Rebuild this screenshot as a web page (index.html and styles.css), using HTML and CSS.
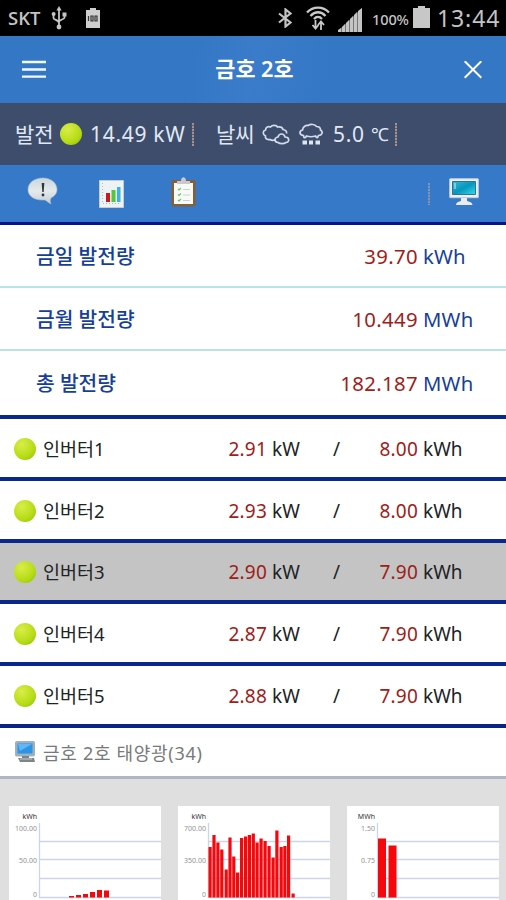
FILE: index.html
```html
<!DOCTYPE html>
<html lang="ko">
<head>
<meta charset="utf-8">
<title>금호 2호</title>
<link rel="stylesheet" href="styles.css">
</head>
<body>
<svg class="defs" width="0" height="0" aria-hidden="true">
  <defs>
    <linearGradient id="screen" x1="0" y1="0" x2="1" y2="1"><stop offset="0" stop-color="#35b9d3"/><stop offset=".5" stop-color="#0796be"/><stop offset="1" stop-color="#35dce8"/></linearGradient>
    <linearGradient id="bubble" x1="0" y1="0" x2="0" y2="1"><stop offset="0" stop-color="#c9d7df"/><stop offset=".5" stop-color="#e5e9eb"/><stop offset="1" stop-color="#c4ced6"/></linearGradient>
  </defs>
</svg>
<div class="app">
  <div class="status">
    <span class="carrier">SKT</span>
    <svg class="usb" width="16" height="24" viewBox="0 0 16 24" fill="none" stroke="#c4c4c4" stroke-width="1.8"><path d="M8 3v18M2.500 9v3c0 2 5.500 2 5.500 5M13.500 9v2.500c0 2-5.500 2-5.500 4.500"/><path d="M8 0l2.600 4.500H5.400z" fill="#c4c4c4" stroke="none"/><circle cx="8" cy="21" r="2.400" fill="#c4c4c4" stroke="none"/><circle cx="2.600" cy="8" r="2" fill="#c4c4c4" stroke="none"/><path d="M11.500 6.500h4v4h-4z" fill="#c4c4c4" stroke="none"/></svg>
    <svg class="battery-small" width="14" height="20" viewBox="0 0 14 20"><path d="M4 0h6v2h4v18H0V2h4z" fill="#cecece"/><path d="M2.500 8v5M5 8h2v5H5zM9 8h2v5H9z" fill="none" stroke="#333" stroke-width="1.200"/></svg>
    <svg class="bluetooth" width="15" height="20" viewBox="0 0 15 20" fill="none" stroke="#c4c4c4" stroke-width="2.200"><path d="M1 5.500l11.500 9L7.500 18.500v-17l5 4L1 14.500"/></svg>
    <svg class="wifi" width="24" height="25" viewBox="0 0 24 25" fill="none" stroke="#c9c9c9" stroke-width="2.300"><path d="M1 6.500c6-6.500 16-6.500 22 0M4.500 10c4.500-5 10.500-5 15 0M8 13c2.500-2.800 5.500-2.800 8 0"/><path d="M9.500 14v8M6.500 19l3 3.500 3-3.500M15 24v-8M12 19l3-3.500 3 3.500" stroke-width="1.800"/></svg>
    <svg class="signal" width="24" height="24" viewBox="0 0 24 24" fill="#c4c4c4"><path d="M0 22l3-2v4H0zM4 19l3-3v8H4zM8 15l3-3v12H8zM12 11l3-3v16h-3zM16 7l3-3v20h-3zM20 3l4-3v24h-4z"/><path d="M0 23L24 0v24H0z" opacity=".6"/></svg>
    <span class="percent">100%</span>
    <svg class="battery" width="17" height="22" viewBox="0 0 17 22"><path d="M5 0h7v2h5v20H0V2h5z" fill="#c7c7c7"/></svg>
    <span class="clock">13:44</span>
  </div>

  <header class="title-bar">
    <svg width="24" height="20" viewBox="0 0 24 20" stroke="#f4f9ff" stroke-width="2.300"><path d="M0 2h24M0 9.500h24M0 16.700h24"/></svg>
    <h1>금호 2호</h1>
    <svg width="18" height="18" viewBox="0 0 18 18" stroke="#fff" stroke-width="2"><path d="M.7.200l16.600 16.600M17.300.200L.7 16.800"/></svg>
  </header>

  <section class="summary">
    <span class="gen">발전</span><i class="dot"></i><span class="gen-value">14.49 kW</span><i class="divider"></i>
    <span class="weather">날씨</span>
    <svg class="cloud" width="28" height="22" viewBox="0 0 28 22" fill="none" stroke="#d1dbeb" stroke-width="1.700"><path d="M14 16.500c-2 1-4 1.500-6 0-4 .5-5-1.500-4.500-3.500C.500 11 .5 8 3.500 7c0-3 3-4 5-3 2-2.500 6-2 7 0 3-.5 5 .5 5.500 2.500 3 .5 4 2 3.500 4"/><path d="M16 19.500c-4-.5-4-5 0-5.500 1-4 6-4 7 0 4.500 0 5 5 1 5.500-2 1.500-6 1.500-8 0z"/></svg>
    <svg class="snow" width="24" height="23" viewBox="0 0 24 23" fill="none" stroke="#d1dbeb" stroke-width="1.700"><path d="M5 14.500l-.5-2C0 12 0 8 3.500 7 4 3.500 7 2 9 2.500c3-2 7-1 8.500 1 3 0 4 1.500 4 3.500 3 2 1.500 5.500-2 5.500l-1 2c-1 .5-1.500-.5-2-1.500-3 1-6 1-9 0-.500 1-1.500 2-2.500 1.500z"/><path d="M3.500 17.500h4.500v4H3.500zM10 17.500h4v4h-4zM16.500 17.500h4.500v4h-4.500z" fill="#dce6f2" stroke="none"/></svg>
    <span class="temp">5.0</span><span class="celsius">℃</span><i class="divider"></i>
  </section>

  <nav class="tools">
    <svg class="tool-alert" width="32" height="28" viewBox="0 0 32 28"><path d="M16 1C7 1 1 6 1 12.500 1 19 7 23 15 23h3c2 1 3.500 3 6 4-1-2.500-1-4 0-6 4-2 6-5 6-8.500C30 6 24 1 16 1z" fill="url(#bubble)" stroke="#a8bdcf" stroke-width=".6"/><path d="M14.700 6h2.600l-.6 9h-1.400z" fill="#30353b"/><circle cx="16" cy="18" r="1.400" fill="#30353b"/></svg>
    <svg class="tool-chart" width="25" height="28" viewBox="0 0 25 28"><path d="M.500.500h24v27H.500z" fill="#edf2f4" stroke="#c5cdd3"/><path d="M3.500 3v19M4 23.500h18" stroke="#afbabf" stroke-dasharray="1 2" fill="none"/><path d="M7 13h4v9H7z" fill="#c51b20"/><path d="M12.500 10h4v12h-4z" fill="#57c53b"/><path d="M18 7h3.500v15H18z" fill="#38b5dc"/></svg>
    <svg class="tool-list" width="25" height="31" viewBox="0 0 25 31"><rect x=".5" y="4" width="24" height="26.500" rx="2" fill="#865f35"/><path d="M3 7h19v21H3z" fill="#f8faf8"/><path d="M6 8V5h4c0-5 5-5 5 0h4v3z" fill="#c7cbd0"/><path d="M7 13l1 1 2-2M7 18.500l1 1 2-2M7 24l1 1 2-2" fill="none" stroke="#70c268" stroke-width="1.200"/><path d="M12 13.500h7M12 19h7M12 24.500h7" stroke="#cbd1d2"/></svg>
    <i class="divider tool-divider"></i>
    <svg class="tool-pc" width="30" height="28" viewBox="0 0 30 28"><rect x=".7" y=".7" width="28.600" height="19" rx=".5" fill="#edf0f4" stroke="#bfcbd8"/><path d="M3.500 3.500h23v13h-23z" fill="url(#screen)" stroke="#32728f"/><path d="M6 5v6" stroke="#c5f6ff"/><path d="M12 20h6v3c3 1 5 1 5.500 4H7c.500-3 2-3 5-4z" fill="#e9edf1"/></svg>
  </nav>

  <section class="totals">
    <div class="total"><span class="label">금일 발전량</span><span class="num">39.70</span><span class="unit">kWh</span></div>
    <div class="total"><span class="label">금월 발전량</span><span class="num">10.449</span><span class="unit">MWh</span></div>
    <div class="total"><span class="label">총 발전량</span><span class="num">182.187</span><span class="unit">MWh</span></div>
  </section>

  <section class="inverters">
    <div class="inverter"><i class="dot"></i><span class="name">인버터1</span><span class="num">2.91</span><span class="unit">kW</span><span>/</span><span class="num">8.00</span><span class="unit">kWh</span></div>
    <div class="inverter"><i class="dot"></i><span class="name">인버터2</span><span class="num">2.93</span><span class="unit">kW</span><span>/</span><span class="num">8.00</span><span class="unit">kWh</span></div>
    <div class="inverter selected"><i class="dot"></i><span class="name">인버터3</span><span class="num">2.90</span><span class="unit">kW</span><span>/</span><span class="num">7.90</span><span class="unit">kWh</span></div>
    <div class="inverter"><i class="dot"></i><span class="name">인버터4</span><span class="num">2.87</span><span class="unit">kW</span><span>/</span><span class="num">7.90</span><span class="unit">kWh</span></div>
    <div class="inverter"><i class="dot"></i><span class="name">인버터5</span><span class="num">2.88</span><span class="unit">kW</span><span>/</span><span class="num">7.90</span><span class="unit">kWh</span></div>
  </section>

  <div class="site">
    <svg width="21" height="22" viewBox="0 0 21 22"><rect x=".5" y=".5" width="19" height="14.500" rx="1" fill="#9ab1c3" stroke="#a6b0b8"/><path d="M2.500 2.500h15v10h-15z" fill="#2b94e6"/><path d="M3 3h14L5 10z" fill="#5fb8f5"/><path d="M7 15h7v2h5l1 4H5l-2-4h4z" fill="#7e8589"/><path d="M5 18h12" stroke="#c5cbd0"/></svg>
    <span>금호 2호 태양광(34)</span>
  </div>

  <section class="charts">
    <svg class="chart" width="152" height="94" viewBox="0 0 152 94">
      <path class="grid-line" d="M30.500 17v74.500H152M31 35.500h121M31 53.500h121M31 72.500h121"/>
      <text class="chart-unit" x="28" y="13">kWh</text><text x="28" y="25">100.00</text><text x="28" y="57">50.00</text><text x="28" y="91">0</text>
      <path class="bars" d="M60 90h5v1.500h-5zM67 89h5v2.500h-5zM74 88h5v3.500h-5zM81 86h5v5.500h-5zM88 84h5v7.500h-5zM95 84.500h5v7h-5z"/>
    </svg>
    <svg class="chart" width="152" height="94" viewBox="0 0 152 94">
      <path class="grid-line" d="M30.500 17v74.500H152M31 35.500h121M31 53.500h121M31 72.500h121"/>
      <path class="bars" d="M30.500 41h3.200v50.500h-3.200zM34.400 29h3.200v62.500h-3.200zM38.300 36.500h3.200v55h-3.200zM42.200 43.500h3.200v48h-3.200zM46.600 63.500h3.200v28h-3.200zM50.400 31.500h3.200v60h-3.200zM54.200 50.500h3.200v41h-3.200zM58 66.500h3.200v25H58zM62 32h3.200v59.500H62zM66 30.500h3.200v61H66zM69.800 29h3.200v62.500h-3.200zM73.700 27.500h3.200v64h-3.200zM77.500 36.500h3.200v55h-3.200zM81.500 32.500h3.200v59h-3.200zM85.500 35h3.200v56.500h-3.200zM89.500 40h3.200v51.500h-3.200zM93.500 51.500h3.200v40h-3.200zM97.300 24.500h3.200v67h-3.200zM101.600 41h3.200v50.500h-3.200zM105.300 40h3.200v51.500h-3.200zM109 29.500h3.200v62H109zM113.500 87.500h3.200v4h-3.200z"/>
      <text class="chart-unit" x="28" y="13">kWh</text><text x="28" y="25">700.00</text><text x="28" y="57">350.00</text><text x="28" y="91">0</text>
    </svg>
    <svg class="chart" width="152" height="94" viewBox="0 0 152 94">
      <path class="grid-line" d="M30.500 17v74.500H152M31 35.500h121M31 53.500h121M31 72.500h121"/>
      <path class="bars" d="M31 32.500h8v59h-8zM41.500 39.500h8v52h-8z"/>
      <text class="chart-unit" x="28" y="13">MWh</text><text x="28" y="25">1.50</text><text x="28" y="57">0.75</text><text x="28" y="91">0</text>
    </svg>
  </section>
</div>
</body>
</html>
```
FILE: styles.css
```css
* { box-sizing: border-box; }
body { margin: 0; overflow: hidden; font-family: "Noto Sans", "Noto Sans CJK KR", sans-serif; }
svg { display: block; flex: none; }
span { white-space: nowrap; }
.defs { position: absolute; }
.app { width: 506px; height: 900px; overflow: hidden; background: #fff; }

.status { display: flex; align-items: center; height: 36px; padding-left: 8px; background: #000; color: #c4c4c4; }
.carrier { flex: none; width: 43px; font: 600 18.500px/36px "Open Sans", sans-serif; }
.battery-small { margin-left: 19px; }
.bluetooth { margin-left: 178px; }
.wifi { margin-left: 13px; }
.signal { margin-left: 8px; margin-top: 4px; }
.percent { flex: none; width: 41px; margin-left: 10px; margin-top: 2px; font-size: 14.500px; font-weight: 500; letter-spacing: -.1px; }
.battery { margin-top: -2px; }
.clock { flex: none; margin-left: 7px; font-size: 23px; font-weight: 400; letter-spacing: .9px; }

.title-bar { display: flex; align-items: center; justify-content: space-between; height: 67px; padding: 0 24px 0 22px; background: linear-gradient(100deg, #3477c5 0 38%, #3a7cc9 50%, #3477c5 65%); }
.title-bar h1 { margin: 0 1px 2px 0; color: #fff; font-size: 21.800px; font-weight: 600; line-height: 30px; }

.dot { display: block; flex: none; width: 22px; height: 22px; border-radius: 50%; background: radial-gradient(circle at 35% 30%, #d9ed4a, #b6dc14 60%, #8cb910); }
.divider { flex: none; width: 2px; height: 23px; background: repeating-linear-gradient(#a89188 0 2px, #59617a 2px 3px); }

.summary { display: flex; align-items: center; height: 62px; padding-left: 15px; background: #3d4d6b; color: #e0e8f5; font-size: 21px; line-height: 30px; }
.gen { width: 45px; }
.gen-value { width: 102px; margin-left: 8px; letter-spacing: .7px; }
.weather { width: 46px; margin-left: 22px; }
.snow { margin-left: 9px; }
.temp { width: 38px; margin-left: 10px; letter-spacing: .7px; }
.celsius { width: 24px; font-size: 18px; }

.tools { display: flex; align-items: center; height: 60px; padding: 0 27px; border-bottom: 3px solid #06148a; background: #3579c8; }
.tool-alert { margin-top: -5px; }
.tool-chart { margin-left: 40px; }
.tool-list { margin-left: 47px; margin-top: -4px; }
.tool-divider { height: 22px; margin-left: auto; background: repeating-linear-gradient(#8095b4 0 2px, #4e7fbc 2px 3px); }
.tool-pc { margin: -4px 0 0 19px; }

.total { display: grid; grid-template-columns: 180px 202px 1fr; align-items: center; height: 63px; padding-left: 36px; border-bottom: 2px solid #b9e3e9; font-size: 20.300px; line-height: 30px; }
.total:last-child { height: 64px; border: 0; }
.total .label { color: #163f98; font-size: 20.300px; font-weight: 500; }
.total .num { letter-spacing: .4px; }
.total .unit { margin-left: 5px; color: #173e9b; letter-spacing: .2px; }
.num { color: #9e2018; text-align: right; }

.inverters { border-bottom: 4px solid #0a2386; }
.inverter { display: grid; grid-template-columns: 29px 138px 86px 66px 44px 41px 1fr; align-items: center; height: 61.750px; padding: 2px 0 0 14px; border-top: 4px solid #09278c; color: #202326; font-size: 19px; line-height: 28px; }
.inverter .name { font-size: 18.500px; }
.inverter .num { letter-spacing: .2px; }
.inverter .unit { margin-left: 5px; font-size: 19px; }
.selected { background: #c4c4c4; }

.site { display: flex; align-items: center; gap: 7px; height: 51px; padding-left: 15px; border-bottom: 3px solid #b1b5c8; color: #77797b; font-size: 18px; letter-spacing: .7px; }
.charts { display: flex; gap: 17px; height: 121px; padding: 27px 0 0 9px; background: #dfdfdf; }
.chart { background: #fff; }
.chart text { fill: #929292; font-size: 7px; text-anchor: end; }
.chart .chart-unit { fill: #333; }
.grid-line { fill: none; stroke: #ccd5e7; stroke-width: 1.300; }
.bars { fill: #f5070c; }
```
